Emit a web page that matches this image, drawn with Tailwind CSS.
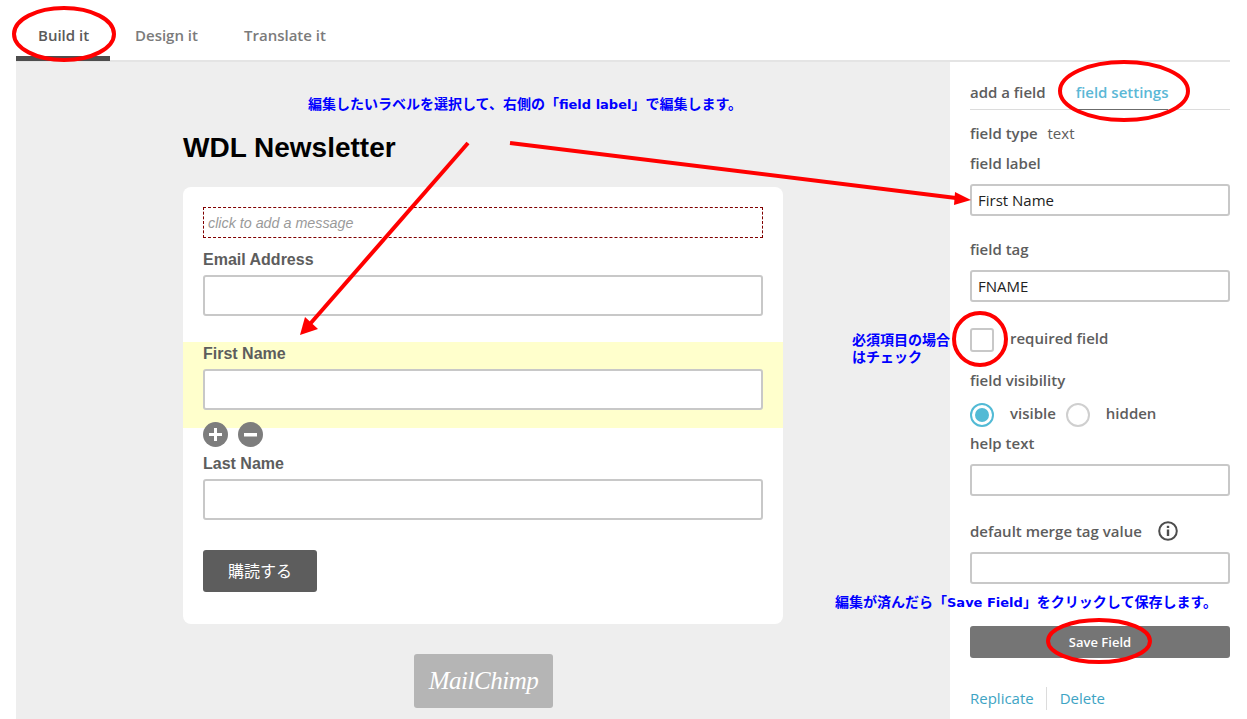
<!DOCTYPE html>
<html lang="ja">
<head>
    <meta charset="UTF-8">
    <title>WDL Newsletter</title>
    <script src="https://cdn.jsdelivr.net/npm/@tailwindcss/browser@4"></script>
</head>
<body class="bg-white">
    <div class="relative w-[1247px] h-[719px] overflow-hidden pl-4 pr-[17px] font-['Open_Sans',sans-serif] text-[15px] font-semibold text-[#5d5d5d]">
        <!-- tabs -->
        <nav class="flex h-[62px] border-b-2 border-[#e4e4e4]">
            <a class="w-[94px] h-[61px] pt-6 pl-[22px] leading-[22px] text-[#5a5a5a] border-b-[5px] border-[#4d4d4d]">Build it</a>
            <a class="ml-[25px] pt-6 leading-[22px] text-[#7b7b7b]">Design it</a>
            <a class="ml-[46px] pt-6 leading-[22px] text-[#7b7b7b]">Translate it</a>
        </nav>

        <div class="flex h-[657px]">
            <!-- form preview -->
            <main class="w-[934px] bg-[#eeeeee] pl-[167px] font-['Liberation_Sans',sans-serif]">
                <h1 class="mt-[69px] h-[34px] text-[28px] leading-[34px] font-bold text-black">WDL Newsletter</h1>
                <div class="mt-[22px] w-[600px] h-[437px] bg-white rounded-lg pt-5">
                    <div class="mx-5 h-[31px] border border-dashed border-[#800000] pl-1 text-[14.300px] leading-[30px] font-normal italic text-[#9a9a9a]">click to add a message</div>
                    <div class="mt-[12px] mx-5 text-[16px] leading-5 font-bold">Email Address</div>
                    <div class="mt-[5px] mx-5 h-[41px] border-2 border-[#c8c8c8] rounded-[3px] bg-white"></div>
                    <div class="mt-[26px] h-[86px] bg-[#ffffcc] px-5 pt-[2px]">
                        <div class="text-[16px] leading-5 font-bold">First Name</div>
                        <div class="mt-[5px] h-[41px] border-2 border-[#c8c8c8] rounded-[3px] bg-white"></div>
                    </div>
                    <div class="relative h-[24px] mx-5">
                        <div class="absolute top-[-6px] left-0 flex gap-[10px]">
                            <span class="w-[25px] h-[25px] rounded-full bg-[#7d7d7d] flex items-center justify-center">
                                <svg width="13" height="13" viewBox="0 0 13 13"><path d="M5 0h3v5h5v3H8v5H5V8H0V5h5z" fill="#fff"/></svg>
                            </span>
                            <span class="w-[25px] h-[25px] rounded-full bg-[#7d7d7d] flex items-center justify-center">
                                <svg width="13" height="4" viewBox="0 0 13 4"><path d="M0 0h13v3.500H0z" fill="#fff"/></svg>
                            </span>
                        </div>
                    </div>
                    <div class="mt-[2px] mx-5 text-[16px] leading-5 font-bold">Last Name</div>
                    <div class="mt-[5px] mx-5 h-[41px] border-2 border-[#c8c8c8] rounded-[3px] bg-white"></div>
                    <div class="mt-[30px] ml-5 w-[114px] h-[42px] pb-[3px] bg-[#5d5d5d] rounded-[3px] flex items-center justify-center text-white text-[16px] font-normal font-['Noto_Sans_CJK_JP',sans-serif]">購読する</div>
                </div>
                <div class="mt-[30px] ml-[231px] w-[139px] h-[54px] bg-[#b5b5b5] rounded-[3px] flex items-center justify-center text-white text-[25px] font-normal italic font-['Liberation_Serif',serif] tracking-[-0.5px]">MailChimp</div>
            </main>

            <!-- field settings sidebar -->
            <aside class="w-[280px] pl-5">
                <div class="relative flex h-[48px] border-b border-[#dcdcdc] pt-[19px] leading-[22px]">
                    <span>add a field</span>
                    <span class="ml-[30px] text-[#5bb8d6]">field settings</span>
                    <span class="absolute left-[106px] bottom-[-1px] w-[92px] h-px bg-[#6b6b6b]"></span>
                </div>
                <div class="mt-[12px] leading-[22px]">field type <span class="ml-[6px] font-normal">text</span></div>
                <div class="mt-2 leading-[22px]">field label</div>
                <div class="mt-[10px] h-[32px] border-2 border-[#c8c8c8] rounded-[3px] pl-[6px] text-[15px] leading-[28px] font-normal text-[#222]">First Name</div>
                <div class="mt-[22px] leading-[22px]">field tag</div>
                <div class="mt-[10px] h-[32px] border-2 border-[#c8c8c8] rounded-[3px] pl-[6px] text-[15px] leading-[28px] font-normal text-[#222]">FNAME</div>
                <div class="mt-[26px] flex items-start h-[24px]">
                    <span class="w-6 h-6 border-2 border-[#c8c8c8] rounded-[3px]"></span>
                    <span class="ml-4 -mt-[1px] leading-[22px]">required field</span>
                </div>
                <div class="mt-[17px] leading-[22px]">field visibility</div>
                <div class="mt-[12px] flex items-center h-[24px] leading-[22px]">
                    <span class="w-6 h-6 rounded-full border-2 border-[#52bad5] flex items-center justify-center"><span class="w-[14px] h-[14px] rounded-full bg-[#52bad5]"></span></span>
                    <span class="ml-4 -mt-[5px]">visible</span>
                    <span class="ml-[10px] w-6 h-6 rounded-full border-2 border-[#cfcfcf]"></span>
                    <span class="ml-4 -mt-[5px]">hidden</span>
                </div>
                <div class="mt-[5px] leading-[22px]">help text</div>
                <div class="mt-[10px] h-[32px] border-2 border-[#c8c8c8] rounded-[3px]"></div>
                <div class="mt-6 flex items-center h-[22px] leading-[22px]">
                    <span>default merge tag value</span>
                    <svg class="ml-4" width="20" height="20" viewBox="0 0 20 20"><circle cx="10" cy="10" r="8.800" fill="none" stroke="#4d4d4d" stroke-width="2"/><rect x="8.800" y="8.500" width="2.400" height="6.500" fill="#4d4d4d"/><rect x="8.800" y="4.800" width="2.400" height="2.200" fill="#4d4d4d"/></svg>
                </div>
                <div class="mt-[10px] h-[32px] border-2 border-[#c8c8c8] rounded-[3px]"></div>
                <div class="mt-[42px] h-[32px] pt-[2px] bg-[#757575] rounded-[3px] flex items-center justify-center text-white text-[13px] font-semibold">Save Field</div>
                <div class="mt-[29px] flex items-center h-[23px] font-normal text-[#3ea4c4]">
                    <span>Replicate</span>
                    <span class="ml-[12px] w-px h-[23px] bg-[#dcdcdc]"></span>
                    <span class="ml-[13px]">Delete</span>
                </div>
            </aside>
        </div>

        <!-- annotations drawn on top of the screenshot -->
        <svg class="absolute inset-0 pointer-events-none" width="1247" height="719" viewBox="0 0 1247 719">
            <g fill="none" stroke="#ff0000" stroke-width="4">
                <ellipse cx="64" cy="34" rx="50" ry="26"/>
                <ellipse cx="1124" cy="91" rx="64" ry="29"/>
                <circle cx="980" cy="339" r="26"/>
                <ellipse cx="1099" cy="641" rx="51" ry="21"/>
                <line x1="468" y1="143" x2="310" y2="324"/>
                <line x1="510" y1="143" x2="956" y2="198"/>
            </g>
            <polygon points="300,335 305,317 318,329" fill="#ff0000"/>
            <polygon points="971,200 955,192 954,205" fill="#ff0000"/>
        </svg>
        <div class="absolute left-[308px] top-[94px] text-[14px] leading-[18px] font-bold text-[#0000ff] whitespace-nowrap font-['Noto_Sans_CJK_JP',sans-serif]">編集したいラベルを選択して、右側の「<span class="text-[13px] font-['DejaVu_Sans',sans-serif]">field label</span>」で編集します。</div>
        <div class="absolute left-[852px] top-[331px] text-[14px] leading-[17px] font-bold text-[#0000ff] whitespace-nowrap font-['Noto_Sans_CJK_JP',sans-serif]">必須項目の場合<br>はチェック</div>
        <div class="absolute left-[835px] top-[592px] text-[14px] leading-[18px] font-bold text-[#0000ff] whitespace-nowrap font-['Noto_Sans_CJK_JP',sans-serif]">編集が済んだら「<span class="text-[13px] font-['DejaVu_Sans',sans-serif]">Save Field</span>」をクリックして保存します。</div>
    </div>
</body>
</html>
